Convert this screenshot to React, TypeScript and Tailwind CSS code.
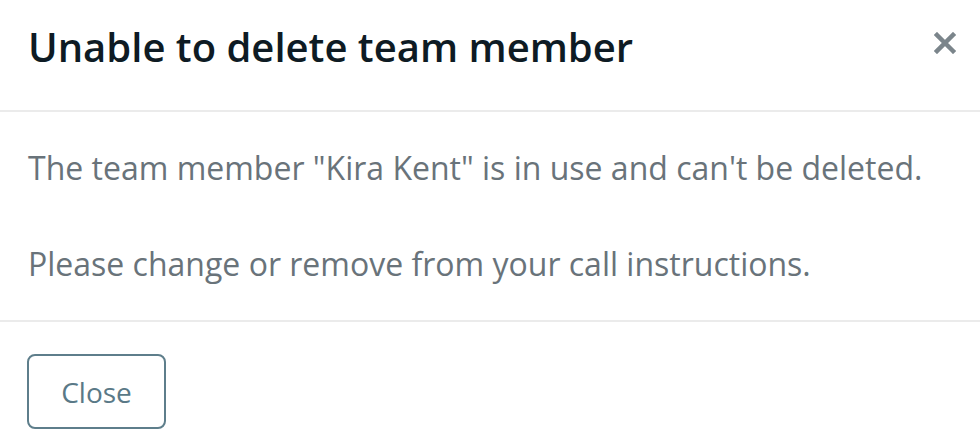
import React from 'react';

const App: React.FC = () => {
  return (
    <div className="w-[980px] h-[446px] bg-white overflow-hidden" style={{ fontFamily: '"Open Sans", sans-serif' }}>
      <div className="h-[112px] flex items-start justify-between border-b-2 border-[#ebebeb] pl-[28px] pr-[24px]">
        <h2 className="mt-[21px] text-[40px] leading-[52px] font-semibold text-[#0e1b24]">Unable to delete team member</h2>
        <button className="mt-[32px] w-[22px] h-[22px] flex items-center justify-center text-[#7b858b]">
          <svg width="22" height="22" viewBox="0 0 22 22" fill="none" stroke="currentColor" strokeWidth="4.5" strokeLinecap="square">
            <path d="M3 3L19 19M19 3L3 19" />
          </svg>
        </button>
      </div>
      <div className="h-[210px] border-b-2 border-[#ebebeb] pl-[28px] pt-[36px] text-[32px] leading-[40px] text-[#69737a]">
        <p>The team member "Kira Kent" is in use and can't be deleted.</p>
        <p className="mt-[56px]">Please change or remove from your call instructions.</p>
      </div>
      <div className="pl-[27px] pt-[32px]">
        <button className="w-[139px] h-[75px] border-2 border-[#5e7e8b] rounded-[8px] text-[28px] text-[#5a7987]">Close</button>
      </div>
    </div>
  );
};

export default App;
